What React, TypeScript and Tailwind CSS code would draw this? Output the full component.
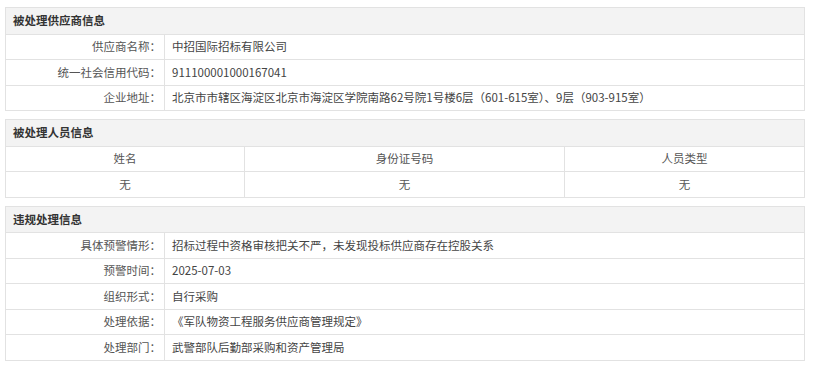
const supplierRows = [
  { label: "供应商名称：", value: "中招国际招标有限公司" },
  { label: "统一社会信用代码：", value: "911100001000167041" },
  {
    label: "企业地址：",
    value: "北京市市辖区海淀区北京市海淀区学院南路62号院1号楼6层（601-615室）、9层（903-915室）",
  },
];

const violationRows = [
  { label: "具体预警情形：", value: "招标过程中资格审核把关不严，未发现投标供应商存在控股关系" },
  { label: "预警时间：", value: "2025-07-03" },
  { label: "组织形式：", value: "自行采购" },
  { label: "处理依据：", value: "《军队物资工程服务供应商管理规定》" },
  { label: "处理部门：", value: "武警部队后勤部采购和资产管理局" },
];

const SectionHeader = ({ title }: { title: string }) => (
  <div className="h-[25.5px] flex items-center px-[7px] bg-[#f3f3f3] font-bold text-[#333]">{title}</div>
);

const InfoRow = ({ label, value }: { label: string; value: string }) => (
  <div className="flex h-[25.5px] border-t border-[#e2e2e2]">
    <div className="w-[159px] shrink-0 flex items-center justify-end pr-[3px] border-r border-[#e2e2e2] text-[#555]">
      {label}
    </div>
    <div className="flex-1 flex items-center pl-[7px] text-[#444] whitespace-nowrap">{value}</div>
  </div>
);

export default function App() {
  return (
    <div
      className="w-[813px] h-[366px] bg-white pt-[7px] pl-[5px] text-[11.5px] leading-none"
      style={{ fontFamily: '"Microsoft YaHei", "Noto Sans CJK SC", sans-serif' }}
    >
      <div className="w-[800px] flex flex-col gap-[8px]">
        <div className="border border-[#e2e2e2]">
          <SectionHeader title="被处理供应商信息" />
          {supplierRows.map((r) => (
            <InfoRow key={r.label} {...r} />
          ))}
        </div>

        <div className="border border-[#e2e2e2]">
          <SectionHeader title="被处理人员信息" />
          {[["姓名", "身份证号码", "人员类型"], ["无", "无", "无"]].map((row, i) => (
            <div key={i} className="flex h-[25.5px] border-t border-[#e2e2e2] text-[#555]">
              <div className="w-[239px] flex items-center justify-center border-r border-[#e2e2e2]">{row[0]}</div>
              <div className="w-[320px] flex items-center justify-center border-r border-[#e2e2e2]">{row[1]}</div>
              <div className="flex-1 flex items-center justify-center">{row[2]}</div>
            </div>
          ))}
        </div>

        <div className="border border-[#e2e2e2]">
          <SectionHeader title="违规处理信息" />
          {violationRows.map((r) => (
            <InfoRow key={r.label} {...r} />
          ))}
        </div>
      </div>
    </div>
  );
}
